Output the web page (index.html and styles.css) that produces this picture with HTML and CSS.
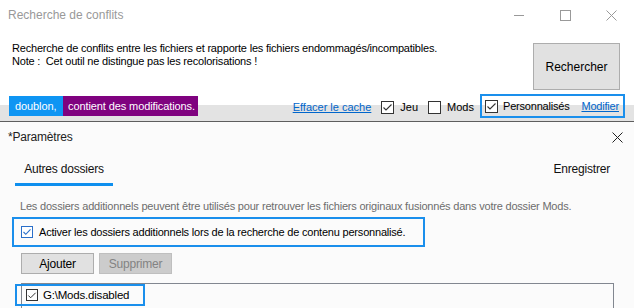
FILE: index.html
```html
<!DOCTYPE html>
<html lang="fr">
<head>
  <meta charset="UTF-8">
  <title>Recherche de conflits</title>
  <link rel="stylesheet" href="styles.css">
</head>
<body>
  <div class="app">
    <div class="win">
      <div class="titlebar">
        <span class="title">Recherche de conflits</span>
        <div class="controls">
          <span class="ctl"><svg width="10" height="10" viewBox="0 0 10 10"><path d="M0 5.5H10" stroke="#999" stroke-width="1"/></svg></span>
          <span class="ctl"><svg width="11" height="11" viewBox="0 0 11 11"><rect x="0.5" y="0.5" width="10" height="10" fill="none" stroke="#999"/></svg></span>
          <span class="ctl"><svg width="11" height="11" viewBox="0 0 11 11"><path d="M0.5 0.5L10.5 10.5M10.5 0.5L0.5 10.5" stroke="#999" stroke-width="1"/></svg></span>
        </div>
      </div>
      <div class="intro">
        <p class="desc">Recherche de conflits entre les fichiers et rapporte les fichiers endommagés/incompatibles.<br>Note :&nbsp; Cet outil ne distingue pas les recolorisations !</p>
        <button class="btn-search">Rechercher</button>
      </div>
      <div class="statusbar">
        <span class="badge blue">doublon,</span><span class="badge purple">contient des modifications.</span>
        <div class="filters">
          <a class="link cache" href="#">Effacer le cache</a>
          <label class="check"><span class="cb"><svg width="11" height="11" viewBox="0 0 11 11"><path d="M1.5 5.5L4 8L9.5 2.5" fill="none" stroke="#333" stroke-width="1.1"/></svg></span>Jeu</label>
          <label class="check"><span class="cb"></span>Mods</label>
          <div class="mark mark-top">
            <label class="check"><span class="cb"><svg width="11" height="11" viewBox="0 0 11 11"><path d="M1.5 5.5L4 8L9.5 2.5" fill="none" stroke="#333" stroke-width="1.1"/></svg></span>Personnalisés</label>
            <a class="link" href="#">Modifier</a>
          </div>
        </div>
      </div>
    </div>

    <div class="settings">
      <div class="settings-head">
        <span>*Paramètres</span>
        <svg width="11" height="11" viewBox="0 0 11 11"><path d="M0.5 0.5L10.5 10.5M10.5 0.5L0.5 10.5" stroke="#222" stroke-width="1"/></svg>
      </div>
      <div class="tabs">
        <span class="tab active">Autres dossiers</span>
        <span class="save">Enregistrer</span>
      </div>
      <p class="hint">Les dossiers additionnels peuvent être utilisés pour retrouver les fichiers originaux fusionnés dans votre dossier Mods.</p>
      <div class="mark mark-enable">
        <label class="check"><span class="cb cb-blue"><svg width="10" height="10" viewBox="0 0 10 10"><path d="M1.5 5L3.8 7.3L8.5 2.3" fill="none" stroke="#2a6fc9" stroke-width="1.1"/></svg></span>Activer les dossiers additionnels lors de la recherche de contenu personnalisé.</label>
      </div>
      <div class="actions">
        <button class="btn">Ajouter</button>
        <button class="btn" disabled>Supprimer</button>
      </div>
      <div class="folders">
        <div class="mark mark-item">
          <label class="check"><span class="cb"><svg width="11" height="11" viewBox="0 0 11 11"><path d="M1.5 5.5L4 8L9.5 2.5" fill="none" stroke="#333" stroke-width="1.1"/></svg></span>G:\Mods.disabled</label>
        </div>
      </div>
    </div>
  </div>
</body>
</html>
```

FILE: styles.css
```css
body {
  margin: 0;
  font-family: "Liberation Sans", Arial, sans-serif;
  color: #000;
}
.app {
  width: 634px;
  height: 308px;
  overflow: hidden;
  background: #fbfbfb;
  white-space: nowrap;
}
.win {
  background: #fff;
}
.titlebar {
  height: 30px;
  display: flex;
  align-items: center;
  justify-content: space-between;
}
.title {
  padding-left: 8px;
  font-size: 12px;
  color: #999;
}
.controls {
  display: flex;
  height: 30px;
}
.ctl {
  width: 46px;
  display: flex;
  align-items: center;
  justify-content: center;
}
.intro {
  height: 66px;
  display: flex;
  justify-content: space-between;
}
.desc {
  margin: 0;
  padding: 12px 0 0 12px;
  font-size: 11px;
  line-height: 13px;
  letter-spacing: -0.2px;
}
.btn-search {
  margin: 13px 14px 0 0;
  width: 87px;
  height: 47px;
  background: #e1e1e1;
  border: 1px solid #adadad;
  font-family: inherit;
  font-size: 12px;
  color: #000;
}
.statusbar {
  height: 25px;
  display: flex;
  align-items: flex-start;
  background: linear-gradient(#fff 0 9px, #e3e3e3 9px);
  border-bottom: 1px solid #5e5e5e;
  font-size: 11px;
}
.badge {
  height: 20px;
  line-height: 20px;
  color: #fff;
  font-size: 11px;
  letter-spacing: -0.1px;
}
.badge.blue {
  margin-left: 9px;
  width: 54px;
  box-sizing: border-box;
  padding-left: 6px;
  background: #0e95f3;
}
.badge.purple {
  width: 135px;
  box-sizing: border-box;
  padding-left: 5px;
  background: #7f027f;
}
.filters {
  margin-left: auto;
  margin-right: 9px;
  height: 22px;
  display: flex;
  align-items: center;
}
.link {
  color: #0066cc;
  text-decoration: underline;
}
.check {
  display: flex;
  align-items: center;
}
.cb {
  width: 13px;
  height: 13px;
  box-sizing: border-box;
  border: 1px solid #333;
  background: #fff;
  margin-right: 6px;
  display: flex;
  align-items: center;
  justify-content: center;
}
.filters .check {
  margin-left: 10px;
}
.mark {
  border: 2px solid #1a8fec;
  box-sizing: border-box;
  display: flex;
  align-items: center;
}
.mark-top {
  margin-left: 6px;
  margin-top: -2px;
  width: 145px;
  height: 24px;
  padding: 0 4px 0 3px;
  justify-content: space-between;
  letter-spacing: -0.2px;
}
.mark-top .check {
  margin-left: 0;
}
.mark-top .cb {
  margin-right: 5px;
}
.settings {
  font-size: 12px;
  letter-spacing: -0.2px;
}
.settings-head {
  height: 30px;
  padding: 0 11px 0 8px;
  display: flex;
  align-items: center;
  justify-content: space-between;
  color: #222;
}
.tabs {
  height: 34px;
  display: flex;
  align-items: flex-start;
  justify-content: space-between;
}
.tab {
  margin-left: 15px;
  width: 98px;
  text-align: center;
  line-height: 16px;
  padding: 9px 0 6px;
  border-bottom: 3px solid #0e8fee;
  color: #111;
}
.save {
  margin-right: 24px;
  line-height: 16px;
  padding-top: 9px;
  color: #111;
}
.hint {
  margin: 13px 0 0 20px;
  font-size: 11px;
  line-height: 14px;
  color: #6d6d6d;
}
.mark-enable {
  margin: 4px 0 0 12px;
  width: 413px;
  height: 30px;
  padding-left: 7px;
  font-size: 11px;
}
.cb-blue {
  width: 12px;
  height: 12px;
  border-color: #2a6fc9;
}
.actions {
  margin: 6px 0 0 21px;
  display: flex;
  gap: 5px;
}
.btn {
  width: 73px;
  height: 21px;
  padding: 0;
  background: #e1e1e1;
  border: 1px solid #adadad;
  font-family: inherit;
  font-size: 12px;
  letter-spacing: -0.2px;
  color: #000;
}
.btn:disabled {
  background: #cccccc;
  border-color: #bfbfbf;
  color: #838383;
}
.folders {
  margin: 9px 0 0 21px;
  width: 593px;
  height: 40px;
  box-sizing: border-box;
  border: 1px solid #828790;
  background: #fbfbfb;
}
.mark-item {
  margin-left: -7px;
  width: 130px;
  height: 22px;
  padding-left: 9px;
  font-size: 11.5px;
}
.mark-item .cb {
  width: 12px;
  height: 12px;
  margin-right: 5px;
}
```
